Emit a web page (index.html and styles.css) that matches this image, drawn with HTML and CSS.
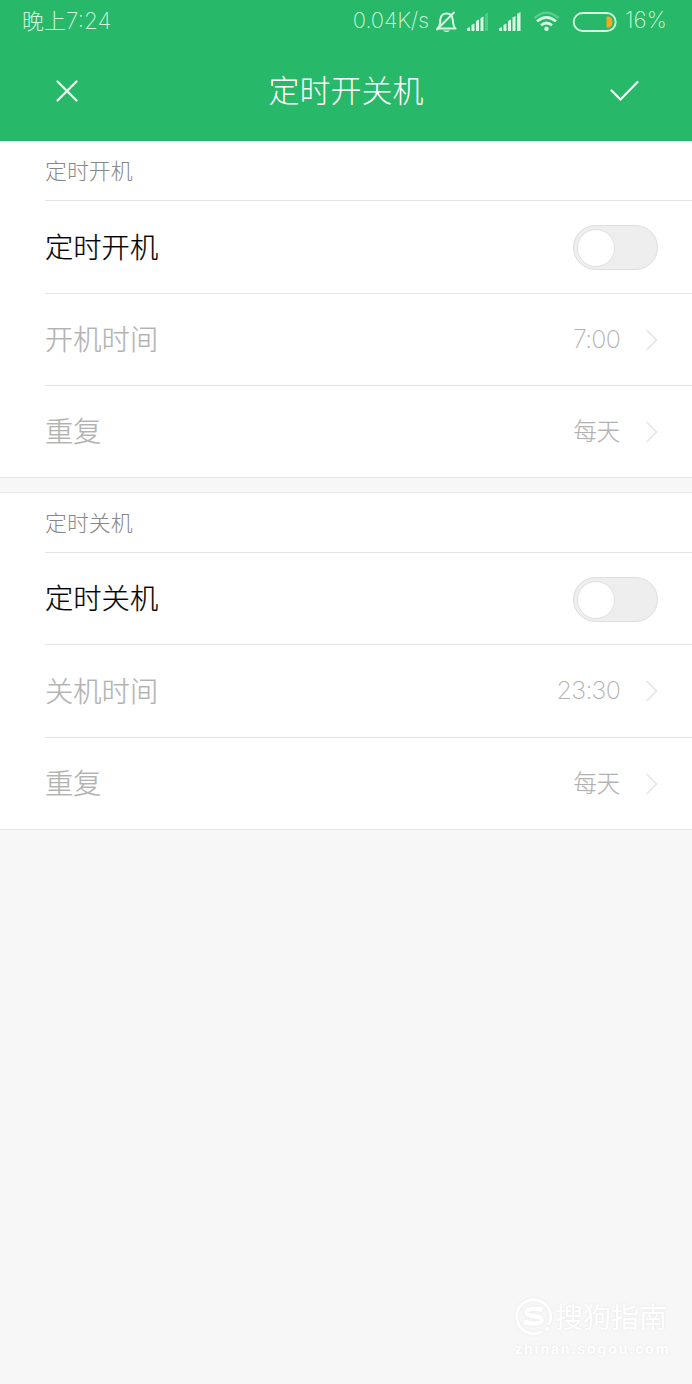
FILE: index.html
```html
<!DOCTYPE html>
<html lang="zh-CN">
<head>
<meta charset="utf-8">
<title>定时开关机</title>
<link rel="stylesheet" href="styles.css">
</head>
<body>
<header class="top">
  <div class="status">
    <span class="clock">晚上<span class="num">7:24</span></span>
    <span class="speed num">0.04K/s</span>
    <svg class="indicators" width="184" height="28" viewBox="434 7 184 28" fill="none">
      <g stroke="#d9fbe4" stroke-width="2" stroke-linecap="round" stroke-linejoin="round">
        <path d="M437.500 27.500C440.500 25 440 22 440.300 18.500C440.800 14.500 443 12.500 446.500 12.500C450.500 12.500 452.500 15 452.700 18.500C453 22 453 25 455.500 27.500Z"/>
        <path d="M454 11.500L437 28.500"/>
      </g>
      <path d="M443 29.500H450Q446.500 32.500 443 29.500Z" fill="#d9fbe4"/>
      <g fill="#d9fbe4">
        <path d="M467 27.500L470 26V30H467ZM471.500 24L474.500 22.500V30H471.500ZM476 20L479 18.500V30H476ZM480.500 17L483.500 15.500V30H480.500Z"/>
        <path d="M485 13L488 11.500V30H485Z" opacity=".25"/>
        <path d="M499 27.500L502 26V30H499ZM503.500 24L506.500 22.500V30H503.500ZM508 20L511 18.500V30H508ZM512.500 16.500L515.500 15V30H512.500ZM517 13L520.500 11V30H517Z"/>
      </g>
      <path d="M534.500 17Q546.500 6.500 558.500 17" stroke="#d9fbe4" stroke-width="2.500" opacity=".3"/>
      <path d="M537 20.300Q546.500 12.500 556 20.300M541 24.300Q546.500 19.700 552 24.300" stroke="#d9fbe4" stroke-width="2.700"/>
      <circle cx="546.500" cy="27.700" r="2.200" fill="#d9fbe4"/>
      <rect x="573.700" y="12" width="42" height="18" rx="9" stroke="#d9fbe4" stroke-width="1.800"/>
      <path d="M606.500 15.500H609Q612.500 17 612.500 21T609 26.500H606.500Z" fill="#f5a623"/>
    </svg>
    <span class="percent num">16%</span>
  </div>
  <div class="bar">
    <svg class="close" width="24" height="24" viewBox="0 0 24 24"><path d="M2.500 2.500L21.500 21.500M21.500 2.500L2.500 21.500"/></svg>
    <h1>定时开关机</h1>
    <svg class="confirm" width="30" height="24" viewBox="0 0 30 24"><path d="M2.500 11.500L11.500 20.500L28.500 3"/></svg>
  </div>
</header>
<main>
  <section class="group">
    <h2>定时开机</h2>
    <div class="row on tall"><span class="label">定时开机</span><span class="switch"></span></div>
    <div class="row"><span class="label">开机时间</span><span class="value num">7:00</span><svg class="arrow" width="13" height="24" viewBox="0 0 13 24"><path d="M1.500 2L11.500 12L1.500 22"/></svg></div>
    <div class="row last"><span class="label">重复</span><span class="value">每天</span><svg class="arrow" width="13" height="24" viewBox="0 0 13 24"><path d="M1.500 2L11.500 12L1.500 22"/></svg></div>
  </section>
  <section class="group second">
    <h2>定时关机</h2>
    <div class="row on"><span class="label">定时关机</span><span class="switch"></span></div>
    <div class="row tall"><span class="label">关机时间</span><span class="value num">23:30</span><svg class="arrow" width="13" height="24" viewBox="0 0 13 24"><path d="M1.500 2L11.500 12L1.500 22"/></svg></div>
    <div class="row last"><span class="label">重复</span><span class="value">每天</span><svg class="arrow" width="13" height="24" viewBox="0 0 13 24"><path d="M1.500 2L11.500 12L1.500 22"/></svg></div>
  </section>
</main>
<footer class="watermark">
  <div class="brand">
    <svg width="40" height="40" viewBox="0 0 40 40" fill="none" stroke="#fff">
      <path d="M28 34.500A17 17 0 1 1 34.500 28" stroke-width="3"/>
      <path d="M28.500 13C20 10.500 12.500 12 12.500 15.500C12.500 19.500 27.500 18.500 27.500 23C27.500 27.500 17 27 9.500 25" stroke-width="4.500"/>
      <path d="M32 33L35 31" stroke-width="4"/>
    </svg>
    <span>搜狗指南</span>
  </div>
  <div class="site">zhinan.sogou.com</div>
</footer>
</body>
</html>
```
FILE: styles.css
```css
* { box-sizing: border-box; }
body {
  margin: 0;
  min-height: 1384px;
  display: flex;
  flex-direction: column;
  background: #f7f7f7;
  font-family: "Noto Sans CJK SC", sans-serif;
  font-weight: 300;
}
svg { display: block; flex: none; }
h1, h2 { margin: 0; font-weight: 300; }
.num { font-family: Inter, "Liberation Sans", sans-serif; font-weight: 250; }
.top { height: 141px; background: #28b869; color: #fff; }
.status {
  height: 41px;
  padding: 0 23px 1px 22px;
  display: flex;
  align-items: center;
  color: #d0f7dd;
  font-size: 22px;
  line-height: 38px;
  white-space: nowrap;
}
.clock { padding-bottom: 1px; }
.clock .num { font-size: 22.500px; }
.indicators { margin-top: 3px; }
.speed { margin-left: auto; margin-right: 5px; letter-spacing: -0.150px; }
.percent { width: 44px; margin-left: 7px; font-size: 22.500px; }
.bar {
  height: 100px;
  padding: 0 53px 0 55px;
  display: grid;
  grid-template-columns: 30px 1fr 30px;
  align-items: center;
}
.bar h1 { padding: 0 2px 4px 0; font-size: 31px; line-height: 44px; text-align: center; }
.bar path { fill: none; stroke: #f2fff6; stroke-width: 2.200; stroke-linecap: round; }
.group { background: #fff; padding-left: 45px; border-bottom: 1px solid #e7e7e7; }
.second { margin-top: 14px; border-top: 1px solid #ececec; }
.group h2 {
  height: 60px;
  border-bottom: 1px solid #e5e5e5;
  color: #888;
  font-size: 21.900px;
  line-height: 57px;
}
.row {
  height: 92px;
  padding-right: 34px;
  display: flex;
  align-items: center;
  justify-content: space-between;
  border-bottom: 1px solid #e5e5e5;
  color: #b2b2b2;
  font-size: 28.300px;
  line-height: 42px;
}
.label { padding-bottom: 3px; -webkit-text-stroke: 0.200px; }
.tall { height: 93px; }
.last { height: 91px; border-bottom: 0; }
.on { color: #000; }
.value { margin-left: auto; margin-right: 25px; padding-bottom: 3px; font-size: 23.300px; -webkit-text-stroke: 0.200px; }
.value.num { padding-bottom: 2px; font-size: 25px; letter-spacing: -0.750px; -webkit-text-stroke: 0; }
.arrow path { fill: none; stroke: #e6e6e6; stroke-width: 1.700; }
.switch {
  width: 85px;
  height: 45px;
  padding: 3px;
  border: 1px solid #dedede;
  border-radius: 23px;
  background: #eee;
}
.on:not(.tall) .switch { margin-top: 1px; }
.switch::before {
  content: "";
  display: block;
  width: 36px;
  height: 36px;
  border: 1px solid #e0e0e0;
  border-radius: 50%;
  background: #fff;
}
.watermark {
  margin: auto 24px 24px auto;
  width: 154px;
  color: #fff;
  filter: drop-shadow(0 0 1px #e4e4e4);
}
.brand { display: flex; align-items: center; height: 42px; font-size: 28px; line-height: 40px; font-weight: 400; white-space: nowrap; }
.brand span { margin-left: 1px; padding-bottom: 2px; }
.site { padding-left: 1px; font: 700 14.500px/22px "Liberation Sans", sans-serif; letter-spacing: 1.750px; white-space: nowrap; }
```
